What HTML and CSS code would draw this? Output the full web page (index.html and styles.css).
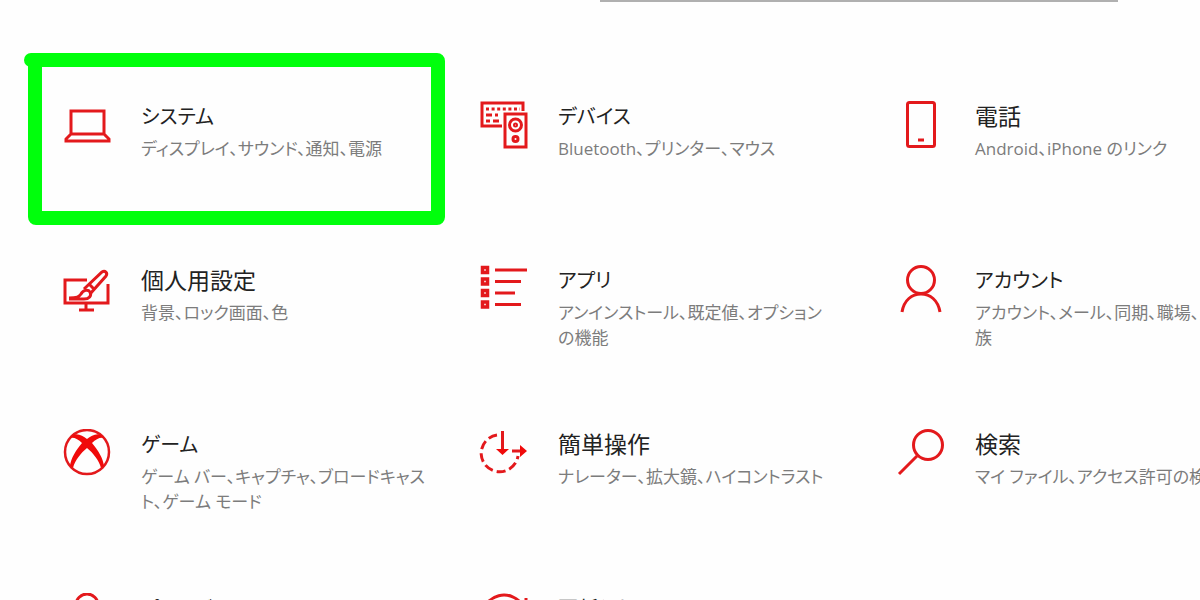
FILE: index.html
```html
<!DOCTYPE html>
<html lang="ja">
<head>
  <meta charset="UTF-8">
  <meta name="viewport" content="width=device-width, initial-scale=1.0">
  <title>設定</title>
  <link rel="stylesheet" href="styles.css">
</head>
<body>
  <header class="search">
    <input type="search" class="search-box" aria-label="設定の検索">
  </header>

  <main class="tiles">
    <a class="tile marked" href="#">
      <svg class="icon" viewBox="0 0 50 50">
        <path d="M9 10h33v23H9zM9 33l-5 5v2h43v-2l-5-5" />
      </svg>
      <div class="text">
        <h2 class="name kana">システム</h2>
        <p class="desc">ディスプレイ、サウンド、通知、電源</p>
      </div>
    </a>

    <a class="tile" href="#">
      <svg class="icon" viewBox="0 0 50 50">
        <path d="M23 25H3V2h41v8" />
        <path d="M7 8h34" stroke-dasharray="3 2.6" />
        <path d="M7 14h6M16 14h3M7 20h4M14 20h6" />
        <path d="M26 13h21v33H26z" />
        <circle cx="36.5" cy="24" r="6" />
        <circle cx="36.5" cy="24" r="1" />
        <circle cx="36.5" cy="38" r="2.5" />
      </svg>
      <div class="text">
        <h2 class="name kana">デバイス</h2>
        <p class="desc">Bluetooth、プリンター、マウス</p>
      </div>
    </a>

    <a class="tile" href="#">
      <svg class="icon" viewBox="0 0 50 50">
        <rect x="11.5" y="1.5" width="27" height="44" rx="2" />
        <path d="M22 39h6" />
      </svg>
      <div class="text">
        <h2 class="name">電話</h2>
        <p class="desc">Android、iPhone のリンク</p>
      </div>
    </a>

    <a class="tile" href="#">
      <svg class="icon" viewBox="0 0 50 50">
        <path d="M25 15H3v23h43V19M24 38v6M17 45h15" />
        <path d="M7 33c8 0 10-1 12-4 2-4 7-5 9-2 2 4-1 7-6 7H7" />
        <path d="M22 24L40 7c3-2 6 1 4 4L28 29M27 19l5 5" />
      </svg>
      <div class="text">
        <h2 class="name">個人用設定</h2>
        <p class="desc">背景、ロック画面、色</p>
      </div>
    </a>

    <a class="tile" href="#">
      <svg class="icon" viewBox="0 0 50 50">
        <path d="M3.500 2.500h5v5h-5zM3.500 14h5v5h-5zM3.500 25.500h5v5h-5zM3.500 37h5v5h-5z" stroke-width="3.500" />
        <path d="M16 5h32M16 16.500h26M16 28h20M16 39.500h26" />
      </svg>
      <div class="text">
        <h2 class="name kana">アプリ</h2>
        <p class="desc">アンインストール、既定値、オプション<br>の機能</p>
      </div>
    </a>

    <a class="tile" href="#">
      <svg class="icon" viewBox="0 0 50 50">
        <circle cx="25" cy="15" r="13.500" />
        <path d="M6 47C8 35 16 29 25 29s17 6 19 18" />
      </svg>
      <div class="text">
        <h2 class="name kana">アカウント</h2>
        <p class="desc">アカウント、メール、同期、職場、家<br>族</p>
      </div>
    </a>

    <a class="tile" href="#">
      <svg class="icon" viewBox="0 0 50 50">
        <circle cx="25" cy="23" r="22" stroke-width="2.500" />
        <path class="solid" d="M11 6c5-2 10 1 14 4 4-3 9-6 14-4l3 3c-4-1-8 1-12 5 6 7 11 15 12 23l-3 2c-2-8-8-15-14-20C19 24 13 31 11 39l-3-2c1-8 6-16 12-23-4-4-8-6-12-5z" />
      </svg>
      <div class="text">
        <h2 class="name kana">ゲーム</h2>
        <p class="desc">ゲーム バー、キャプチャ、ブロードキャス<br>ト、ゲーム モード</p>
      </div>
    </a>

    <a class="tile" href="#">
      <svg class="icon" viewBox="0 0 50 50">
        <path d="M18 6A18.500 18.500 0 1 0 39 27" stroke-dasharray="9 4" />
        <path d="M23.500 2v20M33 22h11" />
        <path class="solid" d="M17 20h13l-6.500 6zM41 16l7 6-7 6z" />
      </svg>
      <div class="text">
        <h2 class="name">簡単操作</h2>
        <p class="desc">ナレーター、拡大鏡、ハイコントラスト</p>
      </div>
    </a>

    <a class="tile" href="#">
      <svg class="icon" viewBox="0 0 50 50">
        <circle cx="32" cy="16" r="14.500" />
        <path d="M21 27L3 45" />
      </svg>
      <div class="text">
        <h2 class="name">検索</h2>
        <p class="desc">マイ ファイル、アクセス許可の検索</p>
      </div>
    </a>

    <a class="tile" href="#">
      <svg class="icon" viewBox="0 0 50 50">
        <path d="M14 20v-8a11 11 0 0 1 22 0v8M7 20h36v26H7z" />
      </svg>
      <div class="text">
        <h2 class="name kana">プライバシー</h2>
      </div>
    </a>

    <a class="tile" href="#">
      <svg class="icon" viewBox="0 0 50 50">
        <path d="M3 23A22 22 0 0 1 44 13M47 5v10H37M47 23a22 22 0 0 1-41 11" />
      </svg>
      <div class="text">
        <h2 class="name kana">更新とセキュリティ</h2>
      </div>
    </a>
  </main>
</body>
</html>
```
FILE: styles.css
```css
body {
  margin: 0;
  height: 100vh;
  overflow: hidden;
  background-color: #fefefe;
  font-family: "Open Sans", "Noto Sans CJK JP", sans-serif;
  font-feature-settings: "palt";
  color: #222;
}
.search {
  margin-top: -34px;
  padding-left: 50%;
}
.search-box {
  display: block;
  box-sizing: border-box;
  width: 518px;
  height: 36px;
  border: 2px solid #b0b0b0;
  background-color: #fff;
}
.tiles {
  display: grid;
  grid-template-columns: repeat(3, 417px);
  grid-auto-rows: 164px;
  padding: 51px 0 0 28px;
}
.tile {
  position: relative;
  display: flex;
  align-items: flex-start;
  gap: 29px;
  padding: 48px 16px 0 34px;
  color: inherit;
  text-decoration: none;
}
/* hand-drawn marker round the highlighted tile */
.marked::before {
  content: "";
  position: absolute;
  inset: 0 0 -8px;
  border: 14px solid #00ff0c;
  border-radius: 8px;
}
.marked::after {
  content: "";
  position: absolute;
  top: 0;
  left: -4px;
  width: 20px;
  height: 14px;
  border-radius: 7px;
  background-color: #00ff0c;
}
.icon {
  flex: none;
  width: 50px;
  height: 50px;
  fill: none;
  stroke: #e3191c;
  stroke-width: 3;
}
.icon .solid {
  fill: #f00a0a;
  stroke: none;
}
.text {
  flex: 1;
}
.name {
  margin: 0 0 5px;
  font-size: 23px;
  font-weight: normal;
  line-height: 30px;
}
.name.kana {
  margin-bottom: 3px;
  font-size: 20px;
  line-height: 32px;
}
.desc {
  margin: 0;
  font-size: 17px;
  line-height: 25px;
  color: #7c7c7c;
}
```
